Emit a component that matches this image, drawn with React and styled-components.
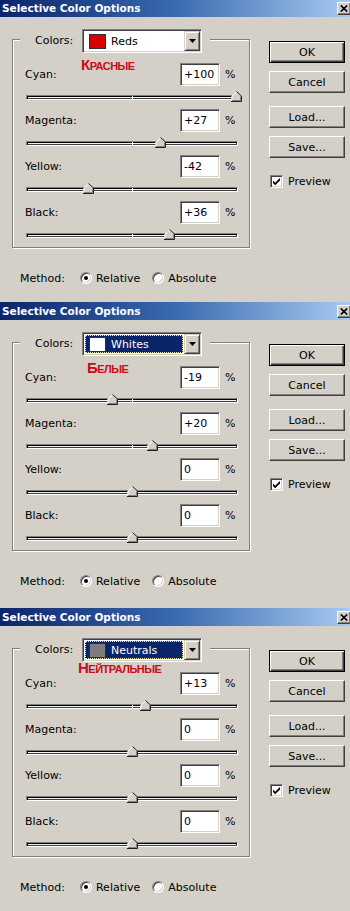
import React from 'react';
import styled, { createGlobalStyle, css } from 'styled-components';

const GlobalStyle = createGlobalStyle`
  html, body { margin: 0; padding: 0; background: #d4d0c8; }
  body {
    font-family: "DejaVu Sans", Tahoma, Verdana, sans-serif;
    font-size: 11px;
    color: #000;
  }
  #root { width: 350px; height: 911px; overflow: hidden; }
`;

const Page = styled.main`
  width: 350px;
  height: 911px;
  overflow: hidden;
  background: #d4d0c8;
  display: flex;
  flex-direction: column;
`;

const Dialog = styled.section`
  flex: none;
  height: ${(p) => p.$h}px;
  display: flex;
  flex-direction: column;
  &:first-child { margin-top: -1px; }
`;

const TitleBar = styled.header`
  flex: none;
  height: 18px;
  display: flex;
  align-items: center;
  justify-content: space-between;
  padding-left: 2px;
  background: linear-gradient(to right, #0a246a 0%, #3a6ab0 50%, #a6caf0 100%);
`;

const TitleText = styled.h1`
  margin: 0;
  font: bold 10.5px/18px "DejaVu Sans", Tahoma, sans-serif;
  color: #fff;
  white-space: nowrap;
`;

const CloseButton = styled.div`
  width: 14px;
  height: 13px;
  box-sizing: border-box;
  margin-right: -1px;
  display: flex;
  align-items: center;
  justify-content: center;
  background: #d4d0c8;
  border: 1px solid;
  border-color: #fff #404040 #404040 #fff;
  box-shadow: inset -1px -1px #808080;
`;

const Body = styled.div`
  position: relative;
  flex: 1;
  display: flex;
  align-items: flex-start;
  padding: 12px 0 0 12px;
`;

const LeftCol = styled.div`
  width: 238px;
  display: flex;
  flex-direction: column;
`;

const Group = styled.fieldset`
  margin: 0;
  padding: 0;
  width: 238px;
  min-width: 0;
  box-sizing: border-box;
  border: 1px solid #808080;
  box-shadow: inset 1px 1px #fff, 1px 1px #fff;
`;

const Legend = styled.legend`
  margin-left: 7px;
  padding: 0 8px 0 15px;
  height: 20px;
  display: flex;
  align-items: flex-start;
  background: #d4d0c8;
`;

const LegendLabel = styled.span`
  width: 47px;
  line-height: 24px;
`;

const Select = styled.div`
  width: 120px;
  height: 24px;
  box-sizing: border-box;
  display: flex;
  padding: 1px;
  border: 1px solid;
  border-color: #808080 #fff #fff #808080;
  box-shadow: inset 1px 1px #404040, inset -1px -1px #d4d0c8;
  background: #fff;
`;

const SelectValue = styled.div`
  flex: 1;
  margin: 1px;
  display: flex;
  align-items: center;
  gap: 5px;
  padding-left: 4px;
  ${(p) =>
    p.$active &&
    css`
      background: #0a246a;
      color: #fff;
      outline: 1px dotted #f0f0c0;
      outline-offset: -1px;
    `}
`;

const Swatch = styled.span`
  width: 17px;
  height: 15px;
  box-sizing: border-box;
  border: 1px solid #303030;
  background: ${(p) => p.$color};
`;

const ArrowButton = styled.div`
  width: 16px;
  height: 20px;
  box-sizing: border-box;
  display: flex;
  align-items: center;
  justify-content: center;
  background: #d4d0c8;
  border: 1px solid;
  border-color: #d4d0c8 #404040 #404040 #d4d0c8;
  box-shadow: inset 1px 1px #fff, inset -1px -1px #808080;
`;

const GroupContent = styled.div`
  padding: 14px 11px 0 12px;
  display: flex;
  flex-direction: column;
`;

const Row = styled.div`
  display: flex;
  flex-direction: column;
`;

const Line = styled.div`
  height: 23px;
  display: flex;
  align-items: center;
`;

const RowLabel = styled.span`
  flex: 1;
`;

const NumField = styled.div`
  width: 40px;
  height: 23px;
  box-sizing: border-box;
  padding-left: 3px;
  display: flex;
  align-items: center;
  background: #fff;
  border: 1px solid;
  border-color: #808080 #fff #fff #808080;
  box-shadow: inset 1px 1px #404040, inset -1px -1px #d4d0c8;
`;

const Pct = styled.span`
  width: 13px;
  margin-left: 5px;
`;

const SliderArea = styled.div`
  height: 23px;
  box-sizing: border-box;
  padding-top: 9px;
`;

const Track = styled.div`
  position: relative;
  margin-left: 1px;
  height: 5px;
  box-sizing: border-box;
  border: 1px solid;
  border-color: #808080 #fff #fff #808080;
  box-shadow: inset 1px 1px #000, inset -1px -1px #404040;
  background: #f2f2f2;
`;

const Tick = styled.span`
  position: absolute;
  left: 50%;
  top: 0;
  width: 1px;
  height: 100%;
  background: #fff;
`;

const Thumb = styled.svg`
  position: absolute;
  top: -5px;
  display: block;
`;

const MethodRow = styled.div`
  height: 16px;
  margin-top: 22px;
  padding-left: 8px;
  display: flex;
  align-items: center;
`;

const Option = styled.span`
  display: flex;
  align-items: center;
  gap: 4px;
  margin-left: ${(p) => p.$gap}px;
`;

const Radio = styled.span`
  width: 12px;
  height: 12px;
  box-sizing: border-box;
  border-radius: 50%;
  display: flex;
  align-items: center;
  justify-content: center;
  background: #fff;
  border: 1px solid;
  border-color: #808080 #fff #fff #808080;
  box-shadow: inset 1px 1px #404040, inset -1px -1px #d4d0c8;
  &::after {
    content: "";
    width: 4px;
    height: 4px;
    border-radius: 50%;
    background: ${(p) => (p.$checked ? '#000' : 'transparent')};
  }
`;

const RightCol = styled.div`
  width: 76px;
  margin-left: 19px;
  padding-top: 12px;
  display: flex;
  flex-direction: column;
`;

const Button = styled.div`
  height: 22px;
  box-sizing: border-box;
  margin-top: ${(p) => p.$gap || 0}px;
  display: flex;
  align-items: center;
  justify-content: center;
  background: #d4d0c8;
  border: 1px solid;
  ${(p) =>
    p.$default
      ? css`
          border-color: #000;
          box-shadow: inset 1px 1px #fff, inset -1px -1px #404040, inset -2px -2px #808080;
        `
      : css`
          border-color: #fff #404040 #404040 #fff;
          box-shadow: inset -1px -1px #808080;
        `}
`;

const CheckRow = styled.div`
  height: 16px;
  margin-top: 15px;
  padding-left: 1px;
  display: flex;
  align-items: center;
  gap: 5px;
`;

const CheckBox = styled.span`
  width: 13px;
  height: 13px;
  box-sizing: border-box;
  display: flex;
  align-items: center;
  justify-content: center;
  background: #fff;
  border: 1px solid;
  border-color: #808080 #fff #fff #808080;
  box-shadow: inset 1px 1px #404040, inset -1px -1px #d4d0c8;
`;

const Caption = styled.span`
  position: absolute;
  left: ${(p) => p.$x}px;
  top: ${(p) => p.$y}px;
  font: bold 15px/15px "Liberation Sans", Arial, sans-serif;
  font-variant: small-caps;
  letter-spacing: -0.5px;
  color: #cc0c18;
  white-space: nowrap;
`;

const dialogs = [
  {
    color: 'Reds',
    swatch: '#d80000',
    active: false,
    caption: 'Красные',
    cap: { x: 81, y: 40 },
    values: [100, 27, -42, 36],
    h: 303,
  },
  {
    color: 'Whites',
    swatch: '#ffffff',
    active: true,
    caption: 'Белые',
    cap: { x: 87, y: 40 },
    values: [-19, 20, 0, 0],
    h: 306,
  },
  {
    color: 'Neutrals',
    swatch: '#7c7c7c',
    active: true,
    caption: 'Нейтральные',
    cap: { x: 78, y: 34 },
    values: [13, 0, 0, 0],
    h: 303,
  },
];

const inks = ['Cyan', 'Magenta', 'Yellow', 'Black'];

const fmt = (v) => (v > 0 ? `+${v}` : `${v}`);

function ThumbIcon({ value }) {
  const center = 1 + 1.04 * (value + 100);
  return (
    <Thumb width="11" height="11" viewBox="0 0 11 11" style={{ left: `${center - 5.5}px` }}>
      <polygon points="0.5,10.5 0.5,5 5.5,0.5 10.5,5 10.5,10.5" fill="#d4d0c8" />
      <polyline points="1,10 1,5.2 5.5,1.2" fill="none" stroke="#fff" strokeWidth="1" />
      <polyline points="5.5,0.5 10.5,5 10.5,10.5 0,10.5" fill="none" stroke="#202020" strokeWidth="1" />
      <polyline points="9.5,5.4 9.5,9.5 1,9.5" fill="none" stroke="#808080" strokeWidth="1" />
    </Thumb>
  );
}

function SliderRow({ name, value }) {
  return (
    <Row>
      <Line>
        <RowLabel>{name}:</RowLabel>
        <NumField>{fmt(value)}</NumField>
        <Pct>%</Pct>
      </Line>
      <SliderArea>
        <Track>
          <Tick />
          <ThumbIcon value={value} />
        </Track>
      </SliderArea>
    </Row>
  );
}

function SelectiveColorDialog({ d }) {
  return (
    <Dialog $h={d.h}>
      <TitleBar>
        <TitleText>Selective Color Options</TitleText>
        <CloseButton>
          <svg width="8" height="7" viewBox="0 0 8 7">
            <path d="M0.8,0.5 L7.2,6.5 M7.2,0.5 L0.8,6.5" stroke="#000" strokeWidth="1.7" />
          </svg>
        </CloseButton>
      </TitleBar>
      <Body>
        <LeftCol>
          <Group>
            <Legend>
              <LegendLabel>Colors:</LegendLabel>
              <Select>
                <SelectValue $active={d.active}>
                  <Swatch $color={d.swatch} />
                  {d.color}
                </SelectValue>
                <ArrowButton>
                  <svg width="7" height="4" viewBox="0 0 7 4">
                    <polygon points="0,0 7,0 3.5,4" fill="#000" />
                  </svg>
                </ArrowButton>
              </Select>
            </Legend>
            <GroupContent>
              {inks.map((name, i) => (
                <SliderRow key={name} name={name} value={d.values[i]} />
              ))}
            </GroupContent>
          </Group>
          <MethodRow>
            <span>Method:</span>
            <Option $gap={15}>
              <Radio $checked />
              Relative
            </Option>
            <Option $gap={12}>
              <Radio />
              Absolute
            </Option>
          </MethodRow>
        </LeftCol>
        <RightCol>
          <Button $default>OK</Button>
          <Button $gap={8}>Cancel</Button>
          <Button $gap={13}>Load...</Button>
          <Button $gap={8}>Save...</Button>
          <CheckRow>
            <CheckBox>
              <svg width="9" height="9" viewBox="0 0 9 9">
                <polygon points="1,3.5 3.2,5.7 8,0.9 8,3.4 3.2,8.2 1,6" fill="#000" />
              </svg>
            </CheckBox>
            Preview
          </CheckRow>
        </RightCol>
        <Caption $x={d.cap.x} $y={d.cap.y}>
          {d.caption}
        </Caption>
      </Body>
    </Dialog>
  );
}

export default function App() {
  return (
    <>
      <GlobalStyle />
      <Page>
        {dialogs.map((d) => (
          <SelectiveColorDialog key={d.color} d={d} />
        ))}
      </Page>
    </>
  );
}
